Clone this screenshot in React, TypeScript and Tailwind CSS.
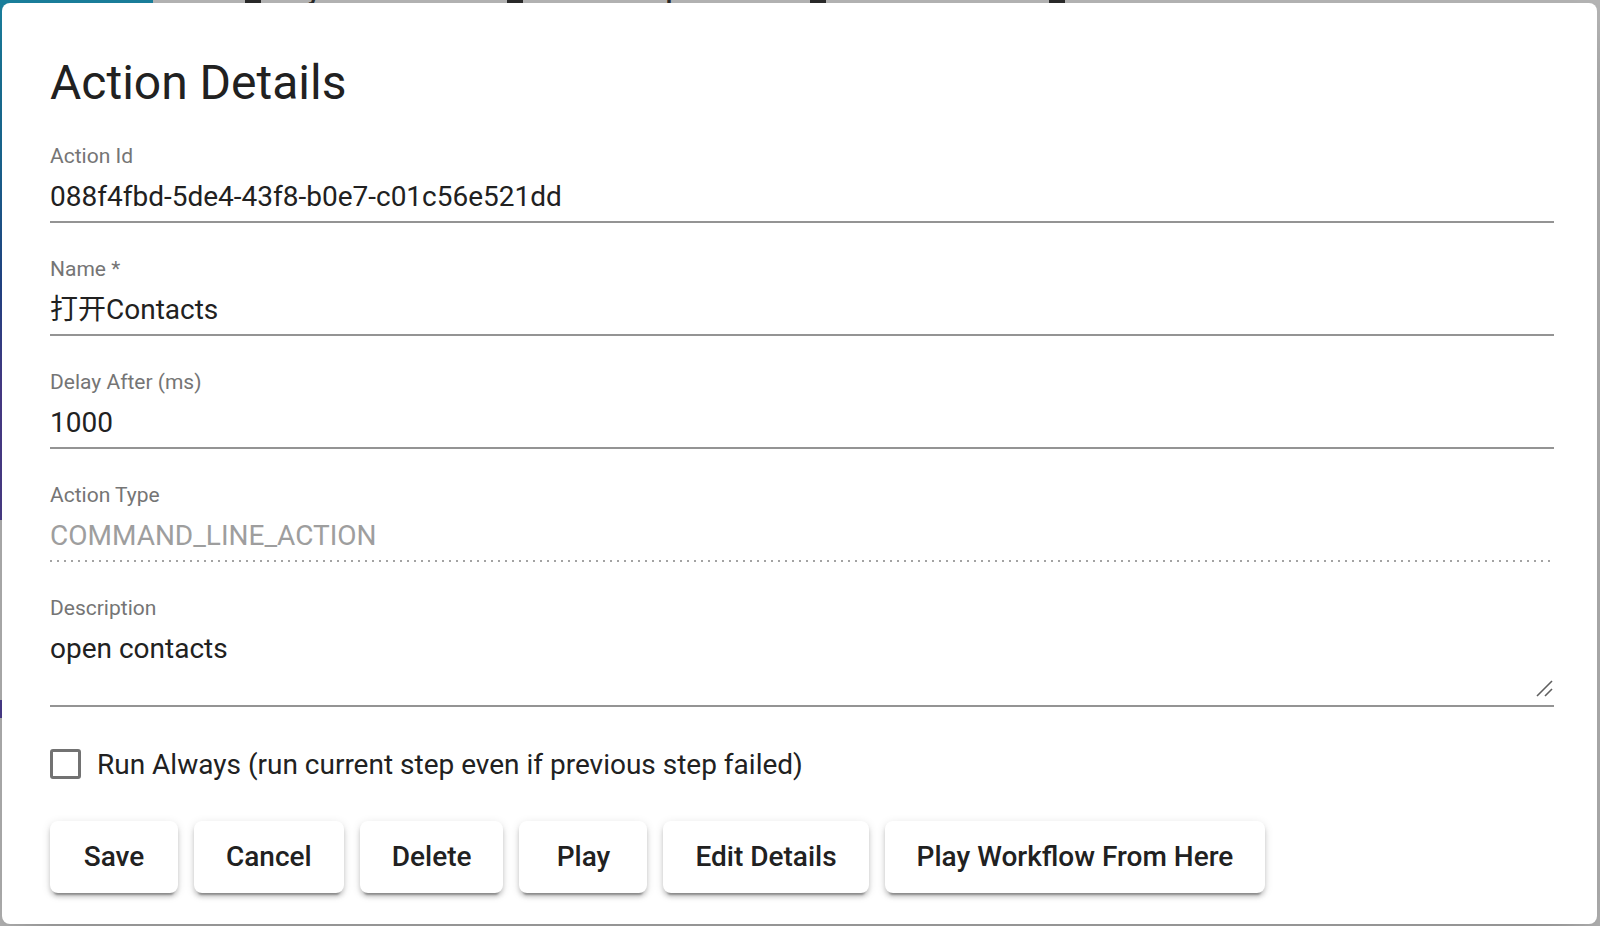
import React from "react";

type FieldProps = {
  label: string;
  value: string;
  disabled?: boolean;
  multiline?: boolean;
};

function Field({ label, value, disabled, multiline }: FieldProps) {
  return (
    <div className="flex flex-col">
      <div className="text-[21px] leading-[24px] text-[#757575]">{label}</div>
      <div
        className={
          "relative mt-[12px] text-[28px] leading-[33px] " +
          (disabled ? "text-[#9e9e9e] " : "text-[#212121] ") +
          (multiline ? "h-[65px]" : "h-[33px]")
        }
      >
        {value}
        {multiline && (
          <svg
            className="absolute right-[1px] bottom-0"
            width="17"
            height="17"
            viewBox="0 0 17 17"
          >
            <line x1="1" y1="16" x2="16" y2="1" stroke="#5f5f5f" strokeWidth="1.6" />
            <line x1="9" y1="16" x2="16" y2="9" stroke="#5f5f5f" strokeWidth="1.6" />
          </svg>
        )}
      </div>
      {disabled ? (
        <div className="mt-[8px] h-[2px] bg-[repeating-linear-gradient(to_right,#a3a3a3_0px,#a3a3a3_2px,transparent_2px,transparent_7px)]" />
      ) : (
        <div className="mt-[8px] h-[2px] bg-[#949494]" />
      )}
    </div>
  );
}

function Btn({ children }: { children: React.ReactNode }) {
  return (
    <button className="h-[72px] min-w-[128px] px-[32px] rounded-[8px] bg-white text-[28px] font-medium text-[#212121] leading-none shadow-[0_6px_2px_-4px_rgba(0,0,0,0.3),0_4px_4px_0_rgba(0,0,0,0.16),0_2px_10px_0_rgba(0,0,0,0.12)]">
      {children}
    </button>
  );
}

export default function App() {
  return (
    <div className="relative w-[1600px] h-[926px] overflow-hidden bg-[#b4b4b4] font-[Roboto,'Noto_Sans_CJK_SC',sans-serif]">
      {/* background app (behind backdrop) */}
      <div className="absolute left-0 top-0 w-[153px] h-[520px] bg-[linear-gradient(to_bottom,#1a7f9c_0%,#1b6a96_30%,#23468a_55%,#4a3c8c_75%,#4b3e8a_100%)]" />
      <div className="absolute left-0 top-[700px] w-[4px] h-[18px] bg-[#4a3c8c]" />
      <div className="absolute left-[153px] top-[-19px] h-[23px] w-[1447px] flex items-end text-[24px] font-bold text-[#2a2a2a] leading-[24px]">
        <div className="ml-[92px] flex items-end gap-[12px]">
          <span className="w-[16px] h-[16px] bg-[#2a2a2a]" />
          <span>Play Workflow</span>
        </div>
        <div className="ml-[80px] flex items-end gap-[12px]">
          <span className="w-[16px] h-[16px] bg-[#2a2a2a]" />
          <span>Clear Workspace</span>
        </div>
        <div className="ml-[92px] flex items-end gap-[12px]">
          <span className="w-[16px] h-[16px] bg-[#2a2a2a]" />
          <span>Add Action</span>
        </div>
        <div className="ml-[92px] flex items-end gap-[12px]">
          <span className="w-[16px] h-[16px] bg-[#2a2a2a]" />
          <span>Save Workflow</span>
        </div>
      </div>

      {/* dialog */}
      <div className="absolute left-[2px] top-[3px] w-[1595px] h-[921px] rounded-[8px] bg-white shadow-2xl pt-[52px] pl-[48px] pr-[43px] flex flex-col">
        <h2 className="text-[48px] leading-[56px] font-normal text-[#212121]">
          Action Details
        </h2>

        <div className="mt-[33px] flex flex-col gap-[34px]">
          <Field label="Action Id" value="088f4fbd-5de4-43f8-b0e7-c01c56e521dd" />
          <Field label="Name *" value="打开Contacts" />
          <Field label="Delay After (ms)" value="1000" />
          <Field label="Action Type" value="COMMAND_LINE_ACTION" disabled />
          <Field label="Description" value="open contacts" multiline />
        </div>

        <div className="mt-[33px] h-[48px] flex items-center">
          <div className="w-[31px] h-[30px] border-[3px] border-[#727272] rounded-[3px]" />
          <span className="ml-[16px] text-[28px] leading-[33px] text-[#212121]">
            Run Always (run current step even if previous step failed)
          </span>
        </div>

        <div className="mt-[33px] flex gap-[16px]">
          <Btn>Save</Btn>
          <Btn>Cancel</Btn>
          <Btn>Delete</Btn>
          <Btn>Play</Btn>
          <Btn>Edit Details</Btn>
          <Btn>Play Workflow From Here</Btn>
        </div>
      </div>
    </div>
  );
}
